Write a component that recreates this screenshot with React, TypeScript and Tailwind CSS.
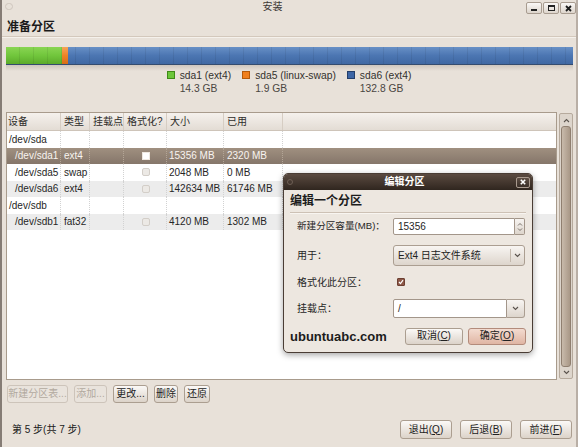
import React from "react";

type Row = { dev: string; group?: boolean; type?: string; size?: string; used?: string; sel?: boolean };

const rows: Row[] = [
  { dev: "/dev/sda", group: true },
  { dev: "/dev/sda1", type: "ext4", size: "15356 MB", used: "2320 MB", sel: true },
  { dev: "/dev/sda5", type: "swap", size: "2048 MB", used: "0 MB" },
  { dev: "/dev/sda6", type: "ext4", size: "142634 MB", used: "61746 MB" },
  { dev: "/dev/sdb", group: true },
  { dev: "/dev/sdb1", type: "fat32", size: "4120 MB", used: "1302 MB" },
];

function Chevron({ up = false }: { up?: boolean }) {
  return (
    <svg width="7" height="5" viewBox="0 0 7 5">
      <path d={up ? "M1 4 L3.5 1.5 L6 4" : "M1 1 L3.5 3.5 L6 1"} stroke="#5a534d" strokeWidth="1.1" fill="none" />
    </svg>
  );
}

function Btn({
  children,
  className = "",
  disabled = false,
  def = false,
}: {
  children: React.ReactNode;
  className?: string;
  disabled?: boolean;
  def?: boolean;
}) {
  const look = disabled
    ? "border-[#cdc4ba] bg-[#e9e3dc] text-[#b2a99f]"
    : def
    ? "border-[#b38b7b] bg-linear-to-b from-[#f3dbd0] to-[#e0b6a4] text-[#222]"
    : "border-[#ab9e90] bg-linear-to-b from-[#fbf9f7] to-[#dcd3c9] text-[#222]";
  return (
    <div className={`flex items-center justify-center rounded-[3px] border leading-none ${look} ${className}`}>
      {children}
    </div>
  );
}

const cellW = ["w-[54px]", "w-[29px]", "w-[34px]", "w-[43px]", "w-[57px]", "w-[59px]"];

export default function App() {
  return (
    <div className="relative w-[578px] h-[447px] overflow-hidden bg-[#e8e1d9] border-l-2 border-r-2 border-l-[#857c75] border-r-[#b9afa6] font-['Liberation_Sans','Noto_Sans_CJK_SC',sans-serif] text-[10px] text-[#262626] flex flex-col">
      {/* Title bar */}
      <div className="h-[14px] flex items-start">
        <div className="ml-[3px] mt-[3px] w-[8px] h-[7px] rounded-full border border-[#cfc6bd]" />
        <div className="flex-1 pl-[6px] pt-[2px] text-center leading-none text-[#3d3935]">安装</div>
        <div className="flex gap-[1px] mt-[2px]">
          <div className="w-[16px] h-[12px] rounded-[2px] border border-[#a89c90] bg-linear-to-b from-[#faf8f6] to-[#ddd5cc] flex items-end justify-center pb-[2px]">
            <div className="w-[6px] h-[2px] bg-[#222]" />
          </div>
          <div className="w-[16px] h-[12px] rounded-[2px] border border-[#a89c90] bg-linear-to-b from-[#faf8f6] to-[#ddd5cc] flex items-center justify-center">
            <div className="w-[7px] h-[6px] border border-[#222] border-t-2" />
          </div>
          <div className="w-[16px] h-[12px] rounded-[2px] border border-[#a89c90] bg-linear-to-b from-[#faf8f6] to-[#ddd5cc] flex items-center justify-center">
            <svg width="7" height="7" viewBox="0 0 7 7">
              <path d="M1 1 L6 6 M6 1 L1 6" stroke="#1c1c1c" strokeWidth="1.8" />
            </svg>
          </div>
        </div>
      </div>

      {/* Heading */}
      <div className="h-[22px] pl-[5px] pt-[3px] flex items-center text-[12px] font-bold text-[#1a1a1a]">准备分区</div>
      <div className="h-[1px] bg-[#d3c8bc]" />
      <div className="h-[1px] bg-[#f5f1ec]" />

      {/* Partition bar */}
      <div className="relative ml-[4px] mt-[9px] w-[567px] h-[18px] flex border-b border-[#33517d]">
        <div className="w-[56px] bg-linear-to-b from-[#89d552] via-[#71c63c] to-[#5cab2b]" />
        <div className="w-[6px] bg-linear-to-b from-[#f6a455] via-[#ee8325] to-[#d86d15]" />
        <div className="flex-1 bg-linear-to-b from-[#6890c6] via-[#4c76b2] to-[#3f68a3]" />
        <div className="absolute inset-0 bg-[repeating-linear-gradient(90deg,transparent_0px,transparent_13px,rgba(0,0,0,0.07)_13px,rgba(0,0,0,0.07)_14px)]" />
        <div className="absolute inset-x-0 top-full h-[7px] bg-linear-to-b from-[rgba(60,50,40,0.18)] to-transparent" />
      </div>

      {/* Legend */}
      <div className="mt-[4px] flex justify-center gap-[11px] text-[10.3px] text-[#34312e] leading-[13px]">
        {[
          { c: "bg-[#6cc63a] border-[#3f8a18]", t: "sda1 (ext4)", s: "14.3 GB" },
          { c: "bg-[#f07f1c] border-[#b45a0a]", t: "sda5 (linux-swap)", s: "1.9 GB" },
          { c: "bg-[#3d66a6] border-[#243f6b]", t: "sda6 (ext4)", s: "132.8 GB" },
        ].map((l) => (
          <div key={l.t} className="flex gap-[5px]">
            <div className={`mt-[2px] w-[8px] h-[8px] border ${l.c}`} />
            <div>
              <div>{l.t}</div>
              <div className="text-[#4a4642]">{l.s}</div>
            </div>
          </div>
        ))}
      </div>

      {/* Table + scrollbar */}
      <div className="mt-[17px] ml-[4px] h-[268px] flex">
        <div className="w-[551px] border border-[#a89b8c] bg-white flex flex-col">
          <div className="h-[18px] flex border-b border-[#cec4b9] bg-linear-to-b from-[#f5f1ed] to-[#e3dcd4] text-[#2e2c2a]">
            {["设备", "类型", "挂载点", "格式化?", "大小", "已用"].map((h, i) => (
              <div key={h} className={`${cellW[i]} flex items-center border-r border-[#d6cdc3] ${i === 0 ? "pl-[1px]" : "pl-[3px]"}`}>
                {h}
              </div>
            ))}
            <div className="flex-1" />
          </div>
          {rows.map((r, idx) => {
            const bg = r.sel
              ? "bg-linear-to-b from-[#a09080] to-[#85766a] text-[#f8f4f0]"
              : idx % 2 === 1
              ? "bg-[#ececec] text-[#262626]"
              : "bg-white text-[#262626]";
            const line = r.sel ? "border-[#b3a596]" : "border-[#d2d2d2]";
            return (
              <div key={r.dev} className={`h-[16.5px] flex ${bg}`}>
                <div className={`${cellW[0]} flex items-center border-r border-dotted ${line} ${r.group ? "pl-[2px]" : "pl-[8px]"}`}>
                  {r.dev}
                </div>
                <div className={`${cellW[1]} flex items-center border-r border-dotted ${line} pl-[3px]`}>{r.type}</div>
                <div className={`${cellW[2]} flex items-center border-r border-dotted ${line}`} />
                <div className={`${cellW[3]} flex items-center justify-center border-r border-dotted ${line}`}>
                  {!r.group &&
                    (r.sel ? (
                      <div className="ml-[2px] w-[8px] h-[8px] bg-white border border-[#efe8e0]" />
                    ) : (
                      <div className="ml-[2px] w-[8px] h-[8px] rounded-[2px] border border-[#d3cec8] bg-[#ece9e5]" />
                    ))}
                </div>
                <div className={`${cellW[4]} flex items-center border-r border-dotted ${line} pl-[2px]`}>{r.size}</div>
                <div className={`${cellW[5]} flex items-center border-r border-dotted ${line} pl-[3px]`}>{r.used}</div>
                <div className="flex-1" />
              </div>
            );
          })}
        </div>
        <div className="ml-[2px] mt-[1px] w-[14px] h-[266px] rounded-[2px] border border-[#b6aa9d] bg-[#ddd5cc] flex flex-col items-center">
          <div className="h-[12px] flex items-center justify-center">
            <Chevron up />
          </div>
          <div className="flex-1 w-[10px] rounded-[3px] border border-[#8f7f70] bg-linear-to-r from-[#c8baab] to-[#a99887]" />
          <div className="h-[11px] flex items-center justify-center">
            <Chevron />
          </div>
        </div>
      </div>

      {/* Partition buttons */}
      <div className="mt-[5px] ml-[5px] h-[18px] flex gap-[6px]">
        <Btn disabled className="w-[61px]">新建分区表...</Btn>
        <Btn disabled className="w-[33px]">添加...</Btn>
        <Btn className="w-[35px]">更改...</Btn>
        <Btn className="w-[24px]">删除</Btn>
        <Btn className="w-[26px]">还原</Btn>
      </div>

      {/* Footer */}
      <div className="mt-[17px] h-[19px] flex items-center">
        <div className="pl-[10px] flex-1 text-[#1a1a1a]">第 5 步(共 7 步)</div>
        <div className="flex gap-[8px] mr-[4px]">
          <Btn className="w-[52px] h-[19px]">
            退出(<span className="underline">Q</span>)
          </Btn>
          <Btn className="w-[52px] h-[19px]">
            后退(<span className="underline">B</span>)
          </Btn>
          <Btn className="w-[52px] h-[19px]">
            前进(<span className="underline">F</span>)
          </Btn>
        </div>
      </div>

      {/* Dialog */}
      <div className="absolute left-[281px] top-[173px] w-[250px] h-[180px] rounded-[5px] border border-[#4a3d35] bg-[#ede7e0] shadow-[0_2px_6px_rgba(0,0,0,0.35)] overflow-hidden flex flex-col">
        <div className="relative h-[16px] bg-linear-to-b from-[#5b4b41] to-[#30261f] flex items-center">
          <div className="ml-[3px] w-[6px] h-[6px] rounded-full border border-[#6e5f55]" />
          <div className="flex-1 text-center font-bold text-white leading-none">编辑分区</div>
          <div className="mr-[2px] w-[14px] h-[11px] rounded-[2px] border border-[#a99a8e] bg-linear-to-b from-[#5e4e44] to-[#3a2f28] flex items-center justify-center">
            <svg width="6" height="6" viewBox="0 0 6 6">
              <path d="M0.8 0.8 L5.2 5.2 M5.2 0.8 L0.8 5.2" stroke="#ffffff" strokeWidth="1.6" />
            </svg>
          </div>
        </div>
        <div className="h-[22px] pl-[6px] flex items-center text-[12px] font-bold text-[#1c1c1c]">编辑一个分区</div>
        <div className="mx-[6px] h-[1px] bg-[#cdc1b5]" />
        <div className="mx-[6px] h-[1px] bg-[#f8f5f1]" />

        <div className="mt-[3px] h-[19px] flex items-center pl-[13px]">
          <div className="w-[96px] text-[#262626] text-[9.6px]">新建分区容量(MB)：</div>
          <div className="w-[122px] h-[17px] border border-[#a3968a] rounded-l-[2px] bg-white flex items-center pl-[4px] text-[#1e1e1e]">15356</div>
          <div className="w-[10px] h-[17px] border border-l-0 border-[#a3968a] rounded-r-[2px] bg-linear-to-b from-[#f7f4f1] to-[#ddd5cc] flex flex-col items-center justify-center">
            <svg width="6" height="12" viewBox="0 0 6 12">
              <path d="M1 4.5 L3 2.5 L5 4.5 M1 7.5 L3 9.5 L5 7.5" stroke="#6a625b" strokeWidth="0.9" fill="none" />
            </svg>
          </div>
        </div>

        <div className="mt-[8px] h-[22px] flex items-center pl-[13px]">
          <div className="w-[96px] text-[#262626]">用于：</div>
          <div className="w-[132px] h-[21px] rounded-[3px] border border-[#ab9e91] bg-linear-to-b from-[#f8f5f2] to-[#ddd5cc] flex items-center">
            <div className="flex-1 pl-[4px] text-[#222]">Ext4 日志文件系统</div>
            <div className="w-[14px] h-[13px] border-l border-[#c3b8ac] flex items-center justify-center">
              <Chevron />
            </div>
          </div>
        </div>

        <div className="mt-[5px] h-[22px] flex items-center pl-[13px]">
          <div className="w-[96px] text-[#262626]">格式化此分区：</div>
          <div className="ml-[4px] w-[8px] h-[8px] rounded-[1px] bg-[#8d5848] border border-[#6d3f31] flex items-center justify-center">
            <svg width="6" height="6" viewBox="0 0 6 6">
              <path d="M1 3 L2.5 4.6 L5 1.2" stroke="#ffffff" strokeWidth="1.2" fill="none" />
            </svg>
          </div>
        </div>

        <div className="mt-[5px] h-[21px] flex items-center pl-[13px]">
          <div className="w-[96px] text-[#262626]">挂载点：</div>
          <div className="w-[114px] h-[19px] border border-[#a3968a] rounded-l-[2px] bg-white flex items-center pl-[4px] text-[#1e1e1e]">/</div>
          <div className="w-[18px] h-[19px] border border-l-0 border-[#ab9e91] rounded-r-[3px] bg-linear-to-b from-[#f8f5f2] to-[#ddd5cc] flex items-center justify-center">
            <Chevron />
          </div>
        </div>

        <div className="mt-[8px] h-[18px] flex items-center pl-[6px]">
          <div className="flex-1 font-bold text-[13px] text-[#1c1c1c] leading-none">ubuntuabc.com</div>
          <div className="flex gap-[5px] mr-[6px]">
            <Btn className="w-[58px] h-[17px]">
              取消(<span className="underline">C</span>)
            </Btn>
            <Btn def className="w-[58px] h-[17px]">
              确定(<span className="underline">O</span>)
            </Btn>
          </div>
        </div>
      </div>
    </div>
  );
}
